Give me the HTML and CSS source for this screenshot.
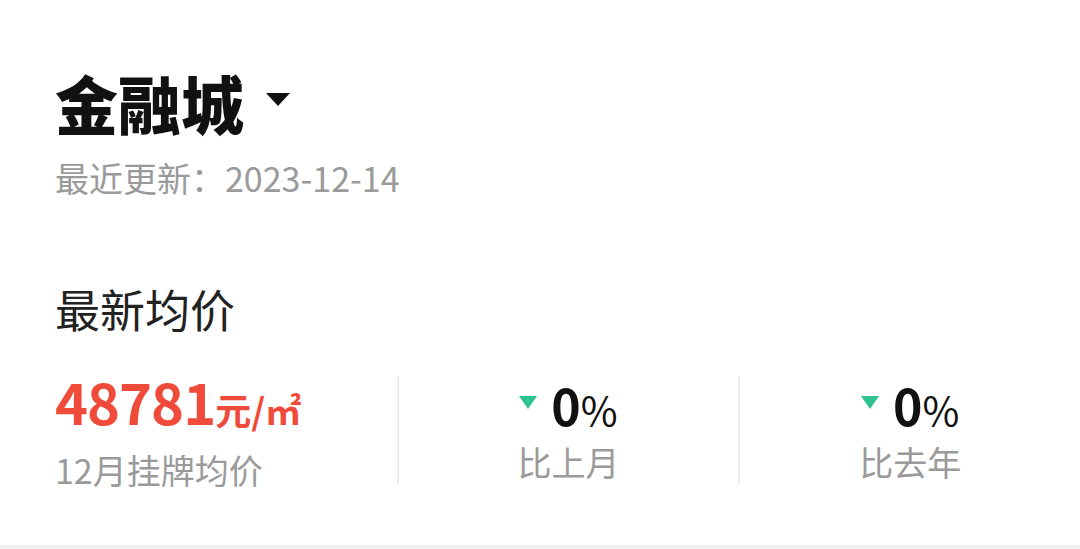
FILE: index.html
```html
<!DOCTYPE html>
<html lang="zh-CN">
<head>
    <meta charset="UTF-8">
    <meta name="viewport" content="width=device-width, initial-scale=1.0">
    <title>金融城</title>
    <link rel="stylesheet" href="styles.css">
</head>
<body>
    <div class="card">
        <div class="title-row">
            <h1 class="title">金融城</h1>
            <!-- dropdown arrow -->
            <svg class="caret" viewBox="0 0 24 14" width="24" height="14">
                <path d="M0 0 H24 L12 13 Z" fill="#111111"/>
            </svg>
        </div>
        <div class="updated">最近更新：2023-12-14</div>

        <h2 class="section-title">最新均价</h2>

        <div class="stats">
            <div class="stat stat-main">
                <div class="price">48781<span class="unit">元/㎡</span></div>
                <div class="stat-label">12月挂牌均价</div>
            </div>
            <div class="stat">
                <div class="change">
                    <svg class="down" viewBox="0 0 18 13" width="18" height="13">
                        <path d="M0 0 H18 L9 13 Z" fill="#2dc48d"/>
                    </svg>
                    <span class="pct-num">0</span><span class="pct">%</span>
                </div>
                <div class="stat-label">比上月</div>
            </div>
            <div class="stat">
                <div class="change">
                    <svg class="down" viewBox="0 0 18 13" width="18" height="13">
                        <path d="M0 0 H18 L9 13 Z" fill="#2dc48d"/>
                    </svg>
                    <span class="pct-num">0</span><span class="pct">%</span>
                </div>
                <div class="stat-label">比去年</div>
            </div>
        </div>
    </div>
    <div class="footer-band"></div>
</body>
</html>
```

FILE: styles.css
```css
html, body {
    margin: 0;
    padding: 0;
    background-color: #ffffff;
}
body {
    font-family: "Noto Sans CJK SC", "Noto Sans", sans-serif;
    height: 549px;
    display: flex;
    flex-direction: column;
}
.card {
    flex: 1;
    padding: 62px 0 0 55px;
}
.title-row {
    display: flex;
    align-items: center;
    height: 80px;
}
.title {
    margin: 0;
    font-size: 63px;
    font-weight: 900;
    line-height: 80px;
    color: #111111;
}
.caret {
    margin-left: 22px;
    margin-top: -4px;
}
.updated {
    margin-top: 13px;
    font-size: 34px;
    line-height: 46px;
    color: #9a9a9a;
}
.section-title {
    margin: 78px 0 0 0;
    font-size: 45px;
    font-weight: 400;
    line-height: 60px;
    color: #222222;
}
.stats {
    display: grid;
    grid-template-columns: 1fr 1fr 1fr;
    margin-top: 37px;
}
.stat {
    display: flex;
    flex-direction: column;
    align-items: center;
    height: 108px;
    border-left: 2px solid #ececec;
}
.stat-main {
    align-items: flex-start;
    border-left: none;
}
.price {
    font-size: 56px;
    font-weight: 700;
    line-height: 50px;
    margin-bottom: 10px;
    color: #f04b3a;
    letter-spacing: -1px;
}
.unit {
    font-size: 36px;
    letter-spacing: 0;
}
.change {
    display: flex;
    align-items: baseline;
    height: 60px;
    color: #111111;
}
.down {
    align-self: center;
    margin-right: 14px;
    margin-top: -8px;
}
.pct-num {
    font-size: 50px;
    font-weight: 700;
    line-height: 56px;
}
.pct {
    font-size: 40px;
    line-height: 56px;
}
.stat-label {
    margin-top: 4px;
    font-size: 34px;
    line-height: 44px;
    color: #9a9a9a;
}
.footer-band {
    height: 4px;
    background-color: #f0f0f0;
}
```
